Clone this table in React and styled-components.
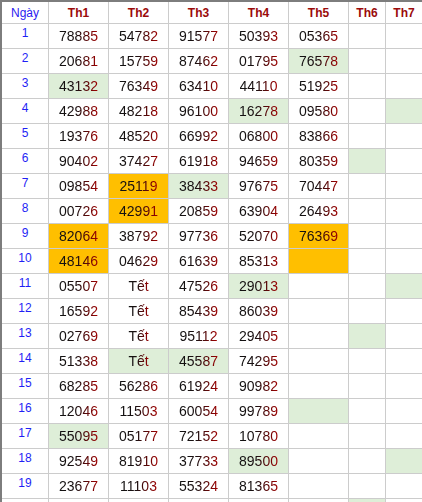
import React from 'react';
import styled, { createGlobalStyle } from 'styled-components';

const GlobalStyle = createGlobalStyle`
  html, body {
    margin: 0;
    padding: 0;
    background: #ffffff;
    overflow: hidden;
  }
`;

const G = 'green';
const O = 'orange';

// each cell: value or [value, tone]
const rows = [
  ['78885', '54782', '91577', '50393', '05365', '', ''],
  ['20681', '15759', '87462', '01795', ['76578', G], '', ''],
  [['43132', G], '76349', '63410', '44110', '51925', '', ''],
  ['42988', '48218', '96100', ['16278', G], '09580', '', ['', G]],
  ['19376', '48520', '66992', '06800', '83866', '', ''],
  ['90402', '37427', '61918', '94659', '80359', ['', G], ''],
  ['09854', ['25119', O], ['38433', G], '97675', '70447', '', ''],
  ['00726', ['42991', O], '20859', '63904', '26493', '', ''],
  [['82064', O], '38792', '97736', '52070', ['76369', O], '', ''],
  [['48146', O], '04629', '61639', '85313', ['', O], '', ''],
  ['05507', 'Tết', '47526', ['29013', G], '', '', ['', G]],
  ['16592', 'Tết', '85439', '86039', '', '', ''],
  ['02769', 'Tết', '95112', '29405', '', ['', G], ''],
  ['51338', ['Tết', G], ['45587', G], '74295', '', '', ''],
  ['68285', '56286', '61924', '90982', '', '', ''],
  ['12046', '11503', '60054', '99789', ['', G], '', ''],
  [['55095', G], '05177', '72152', '10780', '', '', ''],
  ['92549', '81910', '37733', ['89500', G], '', '', ['', G]],
  ['23677', '11103', '55324', '81365', '', '', ''],
  ['', '', '', '', '', ['', G], ''],
];

const heads = ['Th1', 'Th2', 'Th3', 'Th4', 'Th5', 'Th6', 'Th7'];

function App() {
  return (
    <>
      <GlobalStyle />
      <Frame>
        <Grid>
          <DayHead>Ngày</DayHead>
          {heads.map((h) => (
            <Head key={h}>{h}</Head>
          ))}
          {rows.map((row, i) => (
            <React.Fragment key={i}>
              <Day>{i < 19 ? i + 1 : ''}</Day>
              {row.map((c, j) => {
                const [value, tone] = Array.isArray(c) ? c : [c, null];
                return (
                  <Cell key={j} $tone={tone}>
                    {value && <Num>{value}</Num>}
                  </Cell>
                );
              })}
            </React.Fragment>
          ))}
        </Grid>
      </Frame>
    </>
  );
}

export default App;

const Frame = styled.div`
  border-top: 2px solid #7d7d7d;
  border-left: 2px solid #7d7d7d;
  width: 420px;
  font-family: 'Liberation Sans', Arial, sans-serif;
`;

const Grid = styled.div`
  display: grid;
  grid-template-columns: 46px repeat(5, 59px) 36px 36px;
  grid-template-rows: 21px;
  grid-auto-rows: 24px;
  gap: 1px;
  background: #cccccc;
`;

const DayHead = styled.div`
  background: #ffffff;
  color: #2a1cf0;
  font-size: 12px;
  display: flex;
  align-items: center;
  justify-content: center;
`;

const Head = styled.div`
  background: #ffffff;
  color: #9a0a0a;
  font-size: 12px;
  font-weight: bold;
  display: flex;
  align-items: center;
  justify-content: center;
`;

const Day = styled.div`
  background: #ffffff;
  color: #1f1ff5;
  font-size: 12px;
  text-align: center;
  padding-top: 2px;
  line-height: 14px;
`;

const Cell = styled.div`
  background: ${(p) =>
    p.$tone === 'green' ? '#deeed8' : p.$tone === 'orange' ? '#ffbf00' : '#ffffff'};
  display: flex;
  align-items: center;
  justify-content: center;
  font-size: 14px;
`;

const Num = styled.span`
  display: inline-block;
  background: linear-gradient(to right, #111111 0%, #1a0f10 45%, #a00000 100%);
  -webkit-background-clip: text;
  background-clip: text;
  color: transparent;
  line-height: 16px;
`;
